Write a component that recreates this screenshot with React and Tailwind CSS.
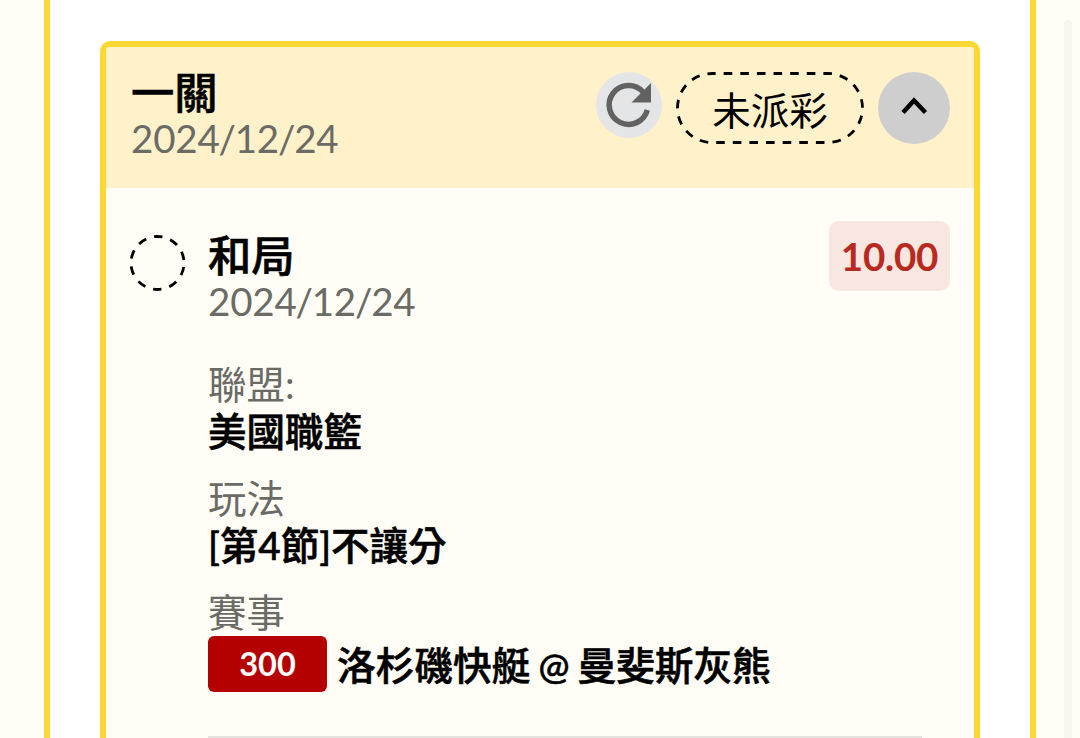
import React from 'react';

const fields = [
    { label: '聯盟:', value: '美國職籃' },
    { label: '玩法', value: '[第4節]不讓分' },
];

const BetDate = ({ value }) => {
    const [year, month, day] = value.split('/');

    return (
        <p className="text-[38.5px] leading-[46px] tracking-[-0.2px] text-[#6b6b66]">
            {year}<span className="-mx-[1px]">/</span>{month}<span className="-mx-[1px]">/</span>{day}
        </p>
    );
};

const RefreshButton = () => (
    <button className="mr-[14px] block size-[66px] shrink-0 rounded-full bg-[#e4e5e7]">
        <svg viewBox="0 0 66 66" className="size-[66px]" fill="none">
            <path d="M47 20 A19.4 19.4 0 1 0 51.3 38" stroke="#626262" strokeWidth="5.5" />
            <path d="M55 11 V30.5 H35.5 Z" fill="#626262" />
        </svg>
    </button>
);

const StatusPill = () => (
    <div className="relative mr-[14px] flex h-[72px] w-[188px] shrink-0 items-center justify-center">
        <svg viewBox="0 0 188 72" className="absolute inset-0 size-full" fill="none">
            <rect x="1.5" y="1.5" width="185" height="69" rx="34.5" stroke="#000" strokeWidth="2.8" strokeDasharray="8.6 8.02" strokeDashoffset="4.96" />
        </svg>
        <span className="pt-[4px] text-[38.5px] leading-none text-black">未派彩</span>
    </div>
);

const BetHeader = () => (
    <header className="flex h-[141px] items-start bg-[#fff2cb] pt-[25px] pr-[24px] pl-[25px]">
        <div className="flex-1">
            <h2 className="-mt-[2px] text-[43.3px] leading-[45px] font-medium [-webkit-text-stroke:0.6px]">一關</h2>
            <BetDate value="2024/12/24" />
        </div>
        <RefreshButton />
        <StatusPill />
        <button className="size-[72px] shrink-0 rounded-full bg-[#cecece]">
            <svg viewBox="0 0 72 72" className="size-[72px]" fill="none">
                <path d="M25 40.5 L36 28.5 L47.5 40.5" stroke="#000" strokeWidth="4.5" />
            </svg>
        </button>
    </header>
);

const App = () => {
    return (
        <div className="flex h-[738px] w-[1080px] overflow-hidden bg-[#fffdf5] font-[Lato,'Noto_Sans_CJK_TC',sans-serif] text-black">
            <div className="ml-[44px] h-full w-[992px] shrink-0 border-x-[6px] border-[#fdd835] bg-white px-[50px] pt-[41px]">
                <article className="h-[760px] overflow-hidden rounded-t-[10px] border-[6px] border-[#fdd835] bg-[#fffdf5]">
                    <BetHeader />
                    <section className="flex pt-[33px] pr-[24px] pl-[24px]">
                        <svg viewBox="0 0 56 56" className="mt-[14px] mr-[22px] size-[56px] shrink-0" fill="none">
                            <circle cx="27.5" cy="28" r="26.5" stroke="#000" strokeWidth="2.8" strokeDasharray="8.6 8.05" strokeDashoffset="-4" />
                        </svg>
                        <div className="flex-1">
                            <div className="flex items-start justify-between">
                                <div className="pt-[12px]">
                                    <h3 className="text-[43.3px] leading-[45px] font-medium [-webkit-text-stroke:0.6px]">和局</h3>
                                    <BetDate value="2024/12/24" />
                                </div>
                                <span className="flex h-[70px] w-[121px] items-center justify-center rounded-[10px] bg-[#f8e7e1] pt-[2px] text-[38.5px] font-bold tracking-[-0.2px] text-[#b8291f]">
                                    10.00
                                </span>
                            </div>
                            <dl className="mt-[36px]">
                                {fields.map((field) => (
                                    <div key={field.label} className="mb-[19px]">
                                        <dt className="text-[38.5px] leading-[48px] text-[#6b6b66]">{field.label}</dt>
                                        <dd className="-mt-px text-[38.5px] leading-[48px] font-medium [-webkit-text-stroke:0.6px]">{field.value}</dd>
                                    </div>
                                ))}
                                <dt className="text-[38.5px] leading-[48px] text-[#6b6b66]">賽事</dt>
                                <dd className="flex items-center">
                                    <span className="mr-[10px] flex h-[56px] w-[119px] items-center justify-center rounded-[6px] bg-[#b40000] pt-px text-[32.5px] font-bold text-white">
                                        300
                                    </span>
                                    <span className="pt-[3px] text-[38.7px] leading-[53px] font-medium whitespace-pre [-webkit-text-stroke:0.6px]">
                                        洛杉磯快艇<span className="mx-[8px] text-[37px]">@</span>曼斐斯灰熊
                                    </span>
                                </dd>
                            </dl>
                            <div className="mt-[44px] mr-[28px] h-[3px] bg-[#e5e3dd]" />
                        </div>
                    </section>
                </article>
            </div>
            <div className="mt-[20px] ml-[28px] h-full w-[8px] rounded-t-full bg-[#f8f5ef]" />
        </div>
    );
};

export default App;
